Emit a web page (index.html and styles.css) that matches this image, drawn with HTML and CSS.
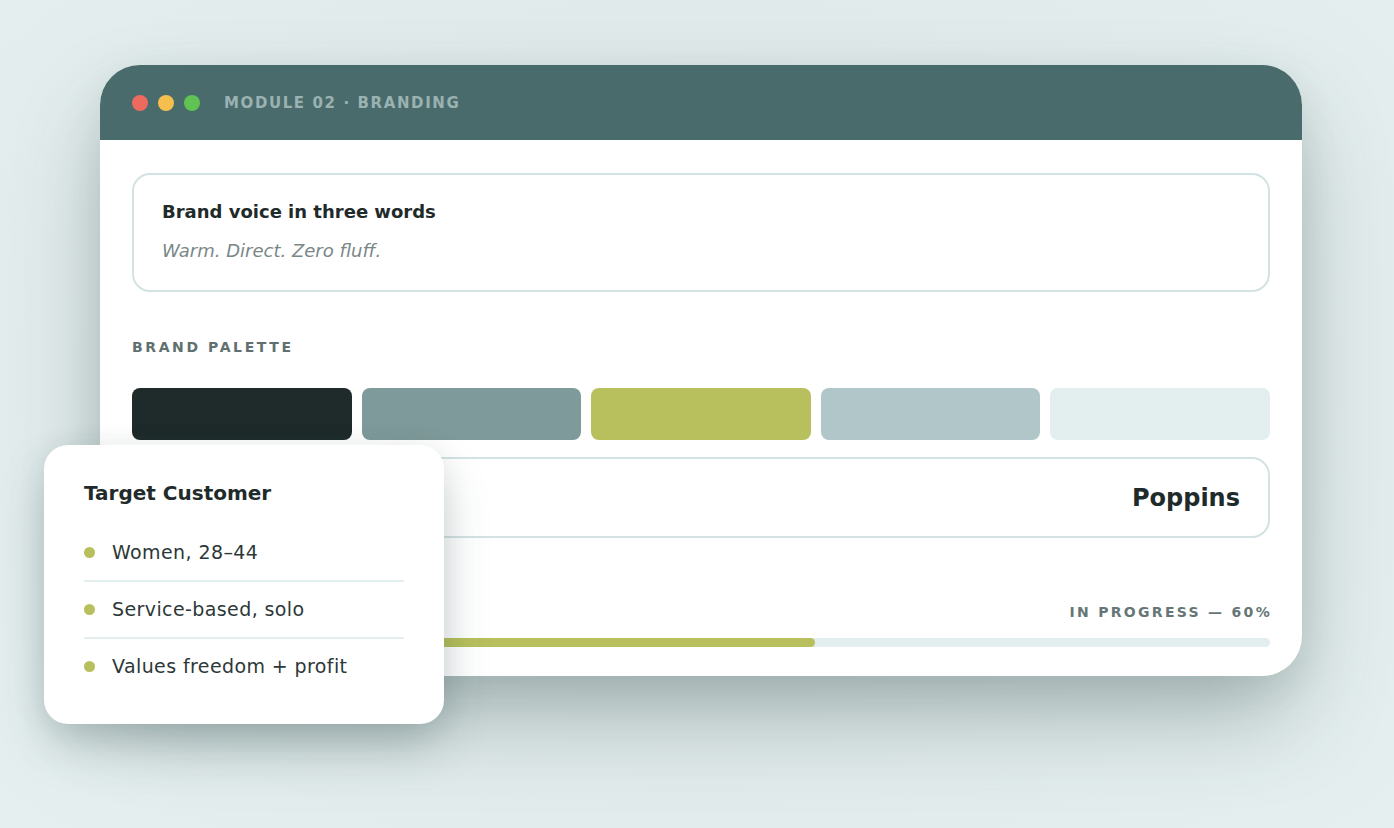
FILE: index.html
```html
<!DOCTYPE html>
<html lang="en">
<head>
<meta charset="utf-8">
<title>Module 02 · Branding</title>
<link rel="stylesheet" href="styles.css">
</head>
<body>
<div class="stage">
  <div class="window">
    <div class="titlebar">
      <div class="dots">
        <span class="dot red"></span>
        <span class="dot yellow"></span>
        <span class="dot green"></span>
      </div>
      <div class="module">MODULE 02 · BRANDING</div>
    </div>
    <div class="body">
      <div class="voice">
        <div class="voice-title">Brand voice in three words</div>
        <div class="voice-text">Warm. Direct. Zero fluff.</div>
      </div>
      <div class="label">BRAND PALETTE</div>
      <div class="palette">
        <div class="swatch c1"></div>
        <div class="swatch c2"></div>
        <div class="swatch c3"></div>
        <div class="swatch c4"></div>
        <div class="swatch c5"></div>
      </div>
      <div class="font-box">
        <div class="font-name">Poppins</div>
      </div>
      <div class="progress-row">
        <div class="progress-label">IN PROGRESS — 60%</div>
      </div>
      <div class="track"><div class="fill" style="width:60%"></div></div>
    </div>
  </div>
  <div class="customer">
    <div class="customer-title">Target Customer</div>
    <ul class="list">
      <li><span class="bullet"></span>Women, 28–44</li>
      <li><span class="bullet"></span>Service-based, solo</li>
      <li><span class="bullet"></span>Values freedom + profit</li>
    </ul>
  </div>
</div>
</body>
</html>
```

FILE: styles.css
```css
* { box-sizing: border-box; }
html, body { margin: 0; padding: 0; }
body {
  width: 1394px;
  height: 828px;
  overflow: hidden;
  background: radial-gradient(ellipse at 50% 45%, #dce5e5 0%, #e0e9e9 45%, #e5efef 100%);
  font-family: "DejaVu Sans", Inter, sans-serif;
  color: #1f2b2b;
}
.stage {
  position: relative;
  padding: 65px 92px 0 100px;
}
.window {
  width: 1202px;
  background: #ffffff;
  border-radius: 40px;
  overflow: hidden;
  box-shadow: 0 45px 90px -10px rgba(40, 70, 70, 0.35), 0 10px 40px rgba(40, 70, 70, 0.08);
}
.titlebar {
  height: 75px;
  background: #4a6b6b;
  display: flex;
  align-items: center;
  padding-left: 32px;
}
.dots { display: flex; gap: 10px; }
.dot { width: 16px; height: 16px; border-radius: 50%; display: block; }
.red { background: #ec6b5e; }
.yellow { background: #f5bf4f; }
.green { background: #5fc454; }
.module {
  margin-left: 24px;
  color: #9bb2b2;
  font-size: 15px;
  font-weight: 700;
  letter-spacing: 1.6px;
}
.body {
  padding: 33px 32px 29px;
}
.voice {
  border: 2px solid #d3e2e2;
  border-radius: 18px;
  padding: 24px 28px 26px;
}
.voice-title {
  font-size: 18px;
  font-weight: 700;
  line-height: 26px;
  color: #1f2b2b;
}
.voice-text {
  margin-top: 13px;
  font-size: 18px;
  font-style: italic;
  font-weight: 400;
  line-height: 26px;
  color: #7a8787;
}
.label {
  margin-top: 45px;
  font-size: 14px;
  font-weight: 700;
  letter-spacing: 2.6px;
  line-height: 20px;
  color: #5f7070;
}
.palette {
  margin-top: 31px;
  display: grid;
  grid-template-columns: repeat(5, 1fr);
  gap: 10px;
}
.swatch { height: 52px; border-radius: 8px; }
.c1 { background: #1f2b2b; }
.c2 { background: #7f9a9a; }
.c3 { background: #b7c05c; }
.c4 { background: #b1c6c9; }
.c5 { background: #e3efef; }
.font-box {
  margin-top: 17px;
  height: 81px;
  border: 2px solid #d3e2e2;
  border-radius: 18px;
  display: flex;
  align-items: center;
  justify-content: flex-end;
  padding: 0 28px;
}
.font-name {
  font-size: 24px;
  font-weight: 700;
  color: #1f2b2b;
}
.progress-row {
  margin-top: 64px;
  display: flex;
  justify-content: flex-end;
}
.progress-label {
  font-size: 14px;
  font-weight: 700;
  letter-spacing: 2.3px;
  line-height: 20px;
  color: #667676;
  margin-right: -2px;
}
.track {
  margin-top: 16px;
  height: 9px;
  border-radius: 5px;
  background: #e3eeee;
  overflow: hidden;
}
.fill {
  height: 100%;
  background: #b7c05c;
  border-radius: 5px;
}
.customer {
  position: absolute;
  left: 44px;
  top: 445px;
  width: 400px;
  height: 279px;
  background: #ffffff;
  border-radius: 24px;
  padding: 35px 40px 32px;
  box-shadow: 0 24px 50px -6px rgba(40, 70, 70, 0.28), 0 4px 30px rgba(40, 70, 70, 0.08);
}
.customer-title {
  font-size: 20px;
  font-weight: 700;
  line-height: 26px;
  color: #1f2b2b;
}
.list {
  list-style: none;
  margin: 19px 0 0;
  padding: 0;
}
.list li {
  display: flex;
  align-items: center;
  gap: 17px;
  padding: 14px 0 15px;
  font-size: 19px;
  letter-spacing: 0.4px;
  line-height: 26px;
  color: #2d3838;
  border-bottom: 2px solid #e3eeee;
}
.list li:last-child { border-bottom: none; }
.bullet {
  width: 11px;
  height: 11px;
  border-radius: 50%;
  background: #b7c05c;
  flex: none;
}
```
